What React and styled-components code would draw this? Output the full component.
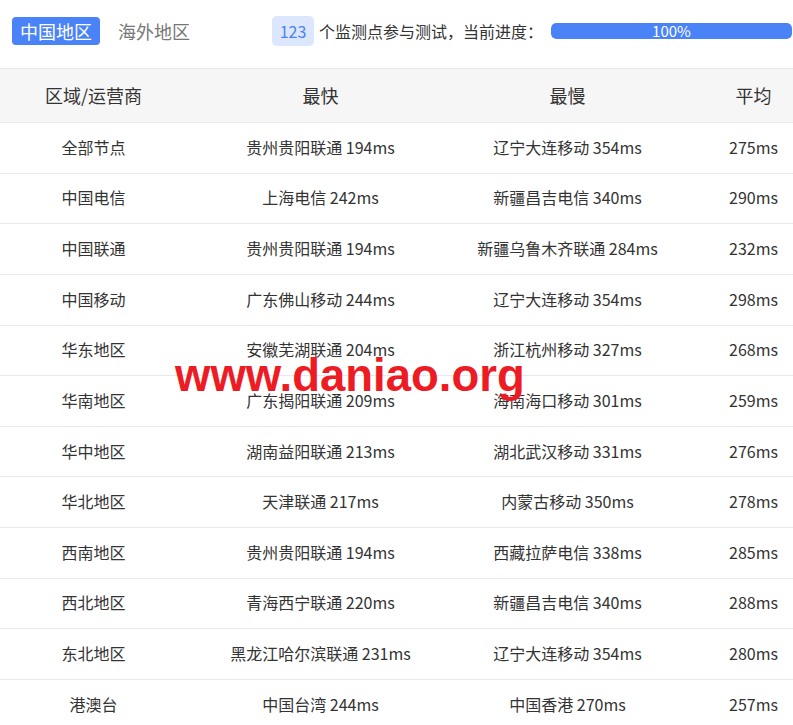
import React from "react";
import styled, { createGlobalStyle } from "styled-components";

const GlobalStyle = createGlobalStyle`
  html, body { margin: 0; padding: 0; background: #fff; }
  body {
    font-family: "Noto Sans CJK SC", "Noto Sans", sans-serif;
    color: #333;
    overflow: hidden;
  }
`;

const Page = styled.div`
  position: relative;
  width: 793px;
  height: 725px;
  overflow: hidden;
`;

const Toolbar = styled.div`
  display: flex;
  align-items: center;
  height: 61px;
  padding: 0 1px 0 12px;
  margin-bottom: 7px;
`;

const Tabs = styled.div`
  display: flex;
  align-items: center;
  gap: 10px;
`;

const Tab = styled.div`
  height: 28px;
  padding: 0 8px;
  display: flex;
  align-items: center;
  font-size: 18px;
  border-radius: 4px;
  background: ${(p) => (p.$active ? "#4a82f8" : "transparent")};
  color: ${(p) => (p.$active ? "#fff" : "#777")};
`;

const Status = styled.div`
  display: flex;
  align-items: center;
  flex: 1;
  margin-left: 74px;
`;

const Badge = styled.div`
  height: 30px;
  width: 42px;
  border-radius: 5px;
  background: #dce7fe;
  color: #4a82f8;
  font-size: 16px;
  display: flex;
  align-items: center;
  justify-content: center;
`;

const StatusText = styled.span`
  margin-left: 5px;
  font-size: 16px;
  color: #333;
  white-space: nowrap;
`;

const Progress = styled.div`
  flex: 1;
  margin-left: 8px;
  height: 16px;
  border-radius: 5px;
  background: #ebeef5;
  overflow: hidden;
`;

const ProgressFill = styled.div`
  height: 100%;
  background: #4a82f8;
  border-radius: 5px;
  color: #fff;
  font-size: 15px;
  line-height: 16px;
  text-align: center;
`;

const TableWrap = styled.div`
  position: relative;
  width: 793px;
  overflow: hidden;
`;

const Table = styled.table`
  width: 826px;
  table-layout: fixed;
  border-collapse: collapse;
  border-top: 1px solid #e6e9ee;
`;

const HeadCell = styled.th`
  height: 51px;
  padding: 0 0 2px;
  background: #f6f6f6;
  font-weight: 400;
  font-size: 18px;
  color: #333;
  text-align: center;
  border-bottom: 1px solid #e6e9ee;
`;

const Row = styled.tr`
  height: 50.64px;
`;

const Cell = styled.td`
  padding: 0 0 2px;
  font-size: 16px;
  color: #333;
  text-align: center;
  white-space: nowrap;
  border-bottom: 1px solid #e6e9ee;
`;

const Watermark = styled.div`
  position: absolute;
  left: 175px;
  top: 285px;
  font-family: "Liberation Sans", Arial, sans-serif;
  font-weight: 700;
  font-size: 45.5px;
  line-height: 1;
  color: #ed1c24;
  white-space: nowrap;
  pointer-events: none;
`;

const rows = [
  ["全部节点", "贵州贵阳联通 194ms", "辽宁大连移动 354ms", "275ms"],
  ["中国电信", "上海电信 242ms", "新疆昌吉电信 340ms", "290ms"],
  ["中国联通", "贵州贵阳联通 194ms", "新疆乌鲁木齐联通 284ms", "232ms"],
  ["中国移动", "广东佛山移动 244ms", "辽宁大连移动 354ms", "298ms"],
  ["华东地区", "安徽芜湖联通 204ms", "浙江杭州移动 327ms", "268ms"],
  ["华南地区", "广东揭阳联通 209ms", "海南海口移动 301ms", "259ms"],
  ["华中地区", "湖南益阳联通 213ms", "湖北武汉移动 331ms", "276ms"],
  ["华北地区", "天津联通 217ms", "内蒙古移动 350ms", "278ms"],
  ["西南地区", "贵州贵阳联通 194ms", "西藏拉萨电信 338ms", "285ms"],
  ["西北地区", "青海西宁联通 220ms", "新疆昌吉电信 340ms", "288ms"],
  ["东北地区", "黑龙江哈尔滨联通 231ms", "辽宁大连移动 354ms", "280ms"],
  ["港澳台", "中国台湾 244ms", "中国香港 270ms", "257ms"],
];

export default function App() {
  return (
    <Page>
      <GlobalStyle />
      <Toolbar>
        <Tabs>
          <Tab $active>中国地区</Tab>
          <Tab>海外地区</Tab>
        </Tabs>
        <Status>
          <Badge>123</Badge>
          <StatusText>个监测点参与测试，当前进度：</StatusText>
          <Progress>
            <ProgressFill style={{ width: "100%" }}>100%</ProgressFill>
          </Progress>
        </Status>
      </Toolbar>
      <TableWrap>
        <Table>
          <colgroup>
            <col style={{ width: 187 }} />
            <col style={{ width: 267 }} />
            <col style={{ width: 227 }} />
            <col style={{ width: 145 }} />
          </colgroup>
          <thead>
            <tr>
              <HeadCell>区域/运营商</HeadCell>
              <HeadCell>最快</HeadCell>
              <HeadCell>最慢</HeadCell>
              <HeadCell>平均</HeadCell>
            </tr>
          </thead>
          <tbody>
            {rows.map((r) => (
              <Row key={r[0]}>
                {r.map((c, i) => (
                  <Cell key={i}>{c}</Cell>
                ))}
              </Row>
            ))}
          </tbody>
        </Table>
        <Watermark>www.daniao.org</Watermark>
      </TableWrap>
    </Page>
  );
}
